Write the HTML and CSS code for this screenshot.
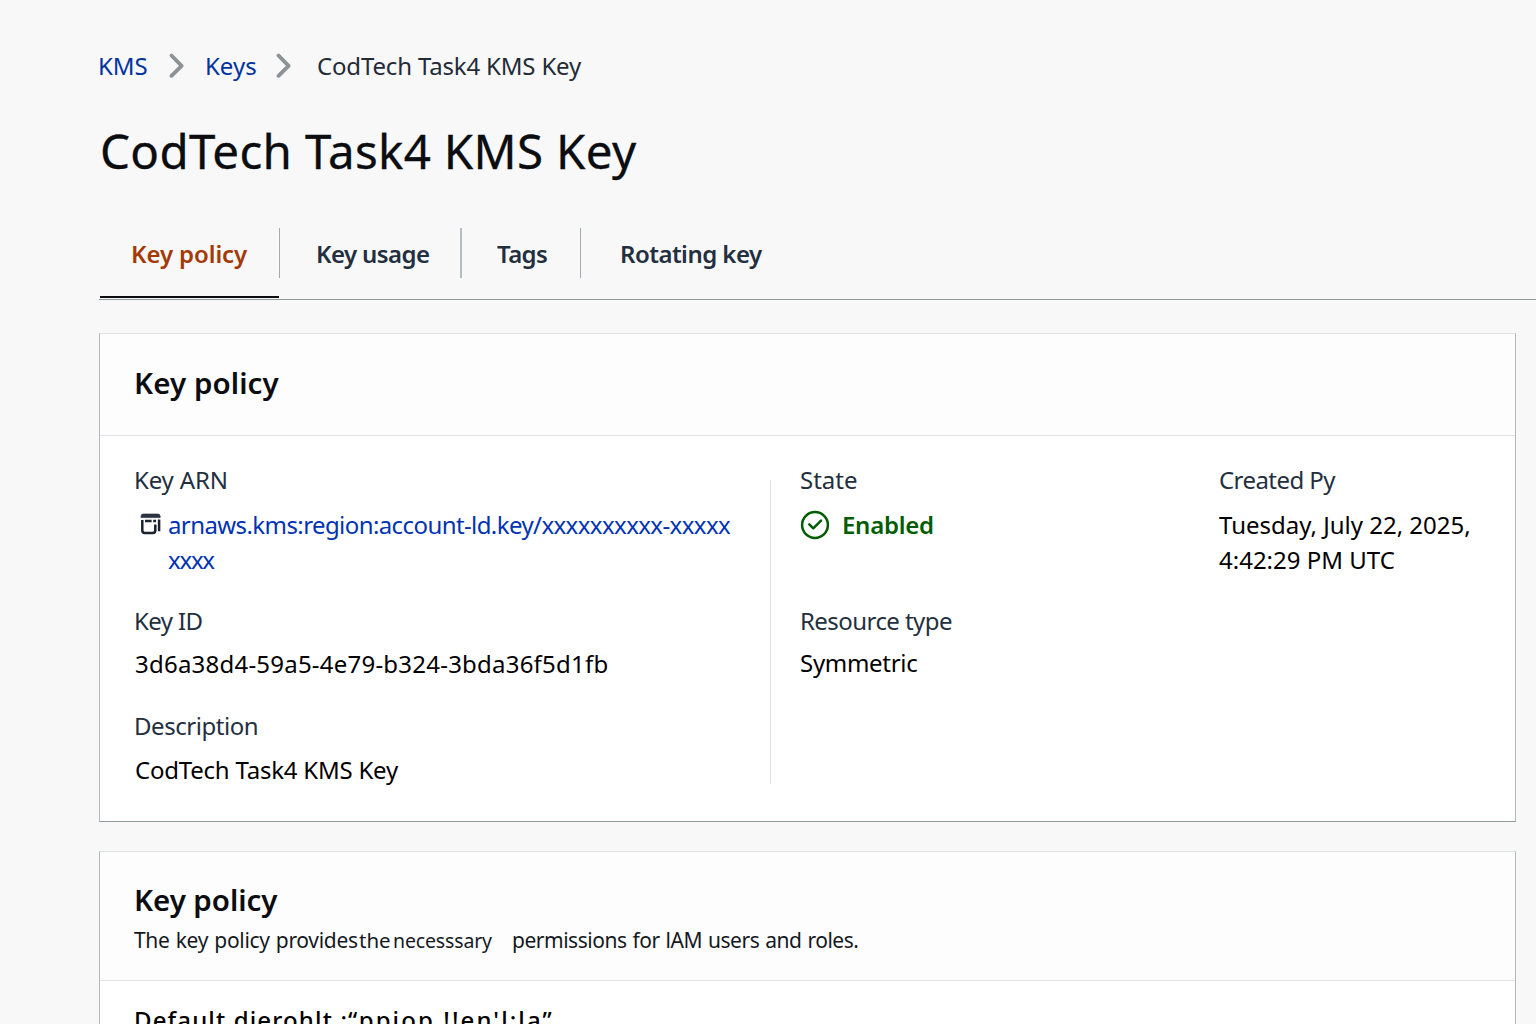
FILE: index.html
```html
<!DOCTYPE html>
<html lang="en">
<head>
<meta charset="utf-8">
<title>CodTech Task4 KMS Key</title>
<link rel="stylesheet" href="styles.css">
</head>
<body>
<main class="page">
  <nav class="breadcrumb">
    <a class="crumb crumb-kms" href="#">KMS</a>
    <svg class="chevron" width="16" height="26" viewBox="0 0 16 26"><path d="M2.5 2.5 12.6 12.8 2.5 22.8"/></svg>
    <a class="crumb crumb-keys" href="#">Keys</a>
    <svg class="chevron" width="16" height="26" viewBox="0 0 16 26"><path d="M2.5 2.5 12.6 12.8 2.5 22.8"/></svg>
    <span class="crumb crumb-current">CodTech Task4 KMS Key</span>
  </nav>
  <h1 class="title">CodTech Task4 KMS Key</h1>

  <div class="tabs">
    <a class="tab tab-policy active" href="#"><span>Key policy</span></a>
    <a class="tab tab-usage" href="#"><span>Key usage</span></a>
    <a class="tab tab-tags" href="#"><span>Tags</span></a>
    <a class="tab tab-rotate" href="#"><span>Rotating key</span></a>
  </div>

  <section class="card">
    <header class="card-head"><h2 class="heading">Key policy</h2></header>
    <div class="details">
      <div class="col col-main">
        <div class="field">
          <div class="label label-arn">Key ARN</div>
          <div class="arn">
            <svg class="copy" width="22" height="22" viewBox="0 0 22 22">
              <path class="lid" d="M1 4.6V3.4Q1 1 3.4 1h14.4Q20.2 1 20.2 3.4v1.2z"/>
              <path class="line" d="M2.3 7v10.6q0 2.4 2.4 2.4h8.2q2.4 0 2.4-2.4V11.5M5 8h6.6M13.2 8h2.8M19.1 6.5v11.8"/>
            </svg>
            <a class="arn-link" href="#">arnaws.kms:region:account-ld.key/xxxxxxxxxx-xxxxx<br><span class="arn-rest">xxxx</span></a>
          </div>
        </div>
        <div class="field">
          <div class="label label-id">Key ID</div>
          <div class="value value-id">3d6a38d4-59a5-4e79-b324-3bda36f5d1fb</div>
        </div>
        <div class="field">
          <div class="label label-desc">Description</div>
          <div class="value value-desc">CodTech Task4 KMS Key</div>
        </div>
      </div>
      <div class="col col-state">
        <div class="field tall">
          <div class="label">State</div>
          <div class="status">
            <svg class="check" width="30" height="30" viewBox="0 0 30 30"><circle cx="15" cy="15" r="12.9"/><path d="M9.3 14.4 13.3 18.3 21 10.7"/></svg>
            <span>Enabled</span>
          </div>
        </div>
        <div class="field field-type">
          <div class="label label-type">Resource type</div>
          <div class="value value-type">Symmetric</div>
        </div>
      </div>
      <div class="col col-created">
        <div class="field">
          <div class="label label-type">Created Py</div>
          <div class="value value-date">Tuesday, July 22, 2025,<br>4:42:29 PM UTC</div>
        </div>
      </div>
    </div>
  </section>

  <section class="card card-policy">
    <header class="card-head head-policy">
      <h2 class="heading heading-small">Key policy</h2>
      <p class="intro"><span class="intro-a">The key policy provides</span><span class="intro-b">the</span><span class="intro-c">necesssary</span><span class="intro-d">permissions for lAM users and roles.</span></p>
    </header>
    <div class="policy">Default djerohlt :<span class="policy-value">“ppjop !!en'l:la”</span></div>
  </section>
</main>
</body>
</html>
```
FILE: styles.css
```css
* { box-sizing: border-box; }

body {
  margin: 0;
  height: 1024px;
  overflow: hidden;
  background: #f8f8f8;
  color: #0b0d10;
  font-family: "Noto Sans", sans-serif;
  font-size: 24px;
}

a { color: inherit; text-decoration: none; }
h1, h2, p { margin: 0; }
.page { padding: 48px 0 0 99px; }

/* breadcrumb */
.breadcrumb { display: flex; align-items: center; height: 36px; margin-left: -1px; line-height: 36px; white-space: nowrap; }
.crumb { color: #0033a0; }
.crumb-kms { width: 71px; }
.crumb-keys { width: 71px; margin-left: 20px; }
.crumb-current { margin-left: 25px; color: #232b37; letter-spacing: -.17px; }
.chevron { flex: none; }
.chevron path { fill: none; stroke: #8d9296; stroke-width: 3.8; stroke-linecap: round; stroke-linejoin: round; }

.title { margin-top: 35px; padding-left: 1px; font-size: 47.5px; line-height: 64px; font-weight: 400; letter-spacing: .33px; -webkit-text-stroke: .3px #0b0d10; }

/* tabs */
.tabs { display: flex; height: 72px; margin-top: 45px; border-bottom: 1px solid #8f9c9c; }
.tab { display: flex; height: 50px; padding-top: 1px; border-right: 1px solid #a0acaf; line-height: 50px; font-weight: 600; color: #232f3e; white-space: nowrap; }
.tab-policy { position: relative; width: 181px; padding-left: 32px; color: #a33a05; letter-spacing: -.1px; }
.tab-policy::after { content: ""; position: absolute; left: 1px; right: 0; top: 68px; height: 2px; background: #0b0d10; }
.tab-usage { width: 182px; padding-left: 36px; border-right: 2px solid #b4bfc2; letter-spacing: -.6px; }
.tab-tags { width: 119px; padding-left: 35px; letter-spacing: -.6px; }
.tab-rotate { padding-left: 39px; border-right: 0; letter-spacing: -.53px; }

/* cards */
.card { width: 1417px; margin-top: 33px; border: 1px solid #b1babb; border-top-color: #e0e2e2; border-bottom-color: #8f9c9c; background: #fff; }
.card-head { height: 102px; padding: 29px 0 0 34px; border-bottom: 1px solid #e1e3e4; background: #fdfdfd; }
.heading { font-size: 29.5px; line-height: 40px; font-weight: 600; letter-spacing: .08px; }
.heading-small { letter-spacing: -.06px; }

.details { display: flex; height: 385px; padding-top: 26px; line-height: 35px; white-space: nowrap; }
.col { display: flex; flex-direction: column; gap: 27px; }
.col-main { position: relative; width: 671px; padding-left: 34px; }
.col-main::after { content: ""; position: absolute; right: 0; top: 18px; width: 1px; height: 304px; background: #dfe2e3; }
.col-state { width: 419px; padding-left: 29px; }
.col-created { padding-left: 29px; }
.field { display: flex; flex-direction: column; gap: 8px; }
.field.tall { height: 114px; }
.field-type { gap: 7px; }

.label { color: #232f3e; }
.label-arn { letter-spacing: -.15px; }
.label-id { letter-spacing: -.6px; }
.label-desc { letter-spacing: -.45px; }
.label-type { letter-spacing: -.56px; }
.value { color: #000; }
.value-id { padding-left: 1px; letter-spacing: .22px; }
.value-desc { margin-top: 1px; padding-left: 1px; letter-spacing: -.22px; }
.value-type { letter-spacing: -.3px; }
.value-date { margin-top: 2px; }

.arn { display: flex; height: 70px; margin-top: 1px; }
.copy { flex: none; margin: 7px 6px 0 6px; }
.lid { fill: #2c3443; stroke: #1b2230; stroke-width: .6; }
.line { fill: none; stroke: #1b2230; stroke-width: 2.5; }
.arn-link { padding-top: 1px; color: #0033b3; letter-spacing: -.59px; }
.arn-rest { letter-spacing: -1.25px; }

.status { display: flex; gap: 12px; margin-top: 1px; color: #005c00; font-weight: 600; letter-spacing: -.27px; }
.status span { padding-top: 1px; }
.check { flex: none; margin-top: 4px; }
.check circle, .check path { fill: none; stroke: #005c00; stroke-width: 2.5; stroke-linecap: round; stroke-linejoin: round; }

/* policy document */
.card-policy { margin-top: 29px; }
.head-policy { height: 129px; padding-top: 28px; }
.intro { display: flex; align-items: baseline; margin-top: 5px; font-size: 21px; line-height: 31px; color: #15191f; white-space: nowrap; }
.intro-a { width: 225px; letter-spacing: -.31px; word-spacing: 1px; }
.intro-b { width: 34px; font-size: 20.5px; }
.intro-c { width: 119px; font-size: 19.5px; letter-spacing: -.15px; }
.intro-d { letter-spacing: -.48px; word-spacing: 1px; }
.policy { height: 80px; padding: 21px 0 0 34px; line-height: 36px; font-weight: 500; letter-spacing: 1.14px; color: #000; white-space: nowrap; }
.policy-value { letter-spacing: 2.1px; }
```
